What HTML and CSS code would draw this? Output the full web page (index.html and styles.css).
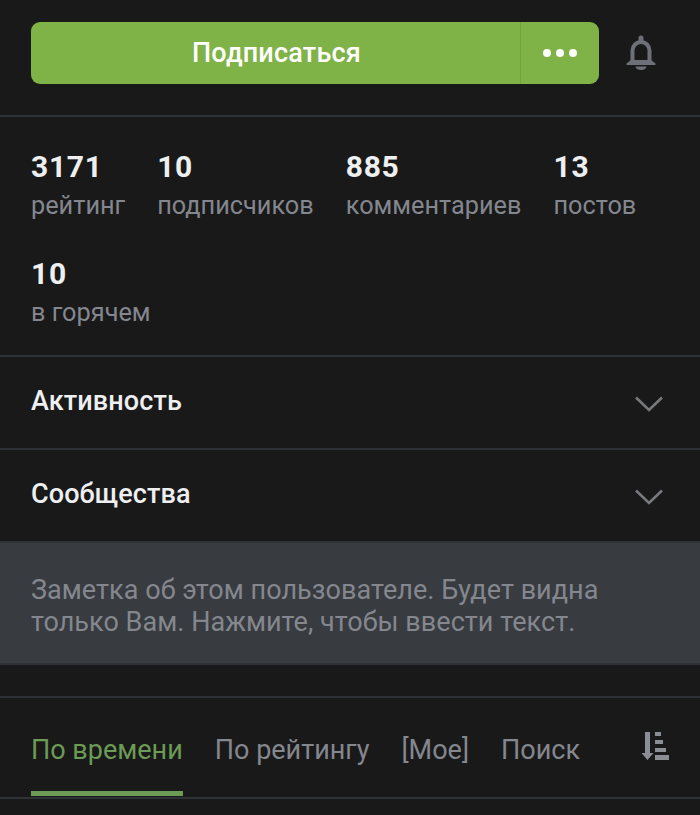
FILE: index.html
```html
<!DOCTYPE html>
<html>
<head>
<meta name="viewport" content="width=device-width, initial-scale=1">
<title>Профиль</title>
<link rel="stylesheet" href="styles.css">
</head>
<body>

<div class="top-bar">
  <div class="sub-btn">
    <div class="sub-main">Подписаться</div>
    <div class="sub-more"><span class="dot"></span><span class="dot"></span><span class="dot"></span></div>
  </div>
  <svg class="bell" width="30" height="36" viewBox="0 0 30 36">
    <path d="M6.500 26V15.500a8.500 8.500 0 0 1 17 0V26" fill="none" stroke="#6d7077" stroke-width="4"/>
    <path d="M12.500 6V3a2.500 2.500 0 0 1 5 0v3z" fill="#6d7077"/>
    <path d="M.500 28.500L5 25H25l4.500 3.500v1.500H.500z" fill="#6d7077"/>
    <path d="M9.500 31.500h11a5.500 3.500 0 0 1-11 0z" fill="#6d7077"/>
  </svg>
</div>

<!-- stats -->
<div class="stats">
  <div class="stat"><b>3171</b><span>рейтинг</span></div>
  <div class="stat"><b>10</b><span>подписчиков</span></div>
  <div class="stat"><b>885</b><span>комментариев</span></div>
  <div class="stat"><b>13</b><span>постов</span></div>
  <div class="stat"><b>10</b><span>в горячем</span></div>
</div>

<div class="row">
  <span class="row-title">Активность</span>
  <svg class="chevron" width="30" height="18" viewBox="0 0 30 18"><path d="M2 2.500L15 15 28 2.500" fill="none" stroke="#77797d" stroke-width="2.600"/></svg>
</div>
<div class="row">
  <span class="row-title">Сообщества</span>
  <svg class="chevron" width="30" height="18" viewBox="0 0 30 18"><path d="M2 2.500L15 15 28 2.500" fill="none" stroke="#77797d" stroke-width="2.600"/></svg>
</div>

<div class="note">Заметка об этом пользователе. Будет видна только Вам. Нажмите, чтобы ввести текст.</div>

<div class="tabs">
  <div class="tab active">По времени</div>
  <div class="tab">По рейтингу</div>
  <div class="tab">[Мое]</div>
  <div class="tab">Поиск</div>
  <svg class="sort" width="30" height="30" viewBox="0 0 30 30">
    <path d="M5 0h5v21h3.500l-6 7-6-7H5z" fill="#8b8e95"/>
    <rect x="15" y="0" width="6" height="4" fill="#8b8e95"/>
    <rect x="15" y="8" width="8" height="4" fill="#8b8e95"/>
    <rect x="15" y="16" width="11" height="4" fill="#8b8e95"/>
    <rect x="15" y="23" width="14" height="5" fill="#8b8e95"/>
  </svg>
</div>

</body>
</html>
```

FILE: styles.css
```css
* {box-sizing: border-box;}

body {
  margin: 0;
  height: 815px;
  overflow: hidden;
  background: #19191a;
  color: #eeeff0;
  font-family: Roboto, "Liberation Sans", sans-serif;
}

/* Subscribe button and bell */
.top-bar {
  display: flex;
  align-items: center;
  height: 117px;
  padding: 0 29px 10px 31px;
  border-bottom: 2px solid #2e3136;
}

.sub-btn {
  display: flex;
  width: 568px;
  height: 62px;
  margin-right: 27px;
  background: #80b347;
  border-radius: 9px;
  color: #fff;
}

.sub-main {
  flex: 1;
  padding-left: 2px;
  font-size: 27px;
  font-weight: 500;
  line-height: 62px;
  letter-spacing: 0.2px;
  text-align: center;
}

.sub-more {
  display: flex;
  align-items: center;
  justify-content: center;
  gap: 5px;
  width: 79px;
  border-left: 1px solid #74a53d;
}

.dot {
  width: 8px;
  height: 8px;
  border-radius: 50%;
  background: #fff;
}

.bell {
  flex: none;
}

/* Stats */
.stats {
  display: flex;
  flex-wrap: wrap;
  align-content: flex-start;
  column-gap: 32px;
  row-gap: 36px;
  height: 240px;
  padding: 33px 31px 0;
  border-bottom: 2px solid #2e3136;
}

.stat b {
  display: block;
  font-size: 30px;
  font-weight: 700;
  line-height: 34px;
  letter-spacing: 0.7px;
}

.stat span {
  display: block;
  margin-top: 7px;
  font-size: 25.300px;
  line-height: 30px;
  color: #84878e;
}

/* Collapsible rows */
.row {
  display: flex;
  align-items: center;
  justify-content: space-between;
  height: 93px;
  padding: 0 36px 0 31px;
  border-bottom: 2px solid #2e3136;
}

.row-title {
  margin-bottom: 3px;
  font-size: 27px;
  font-weight: 500;
  letter-spacing: 0.1px;
}

.chevron {
  margin-top: 2px;
}

/* Note */
.note {
  height: 122px;
  padding: 31px 31px 0;
  background: #383b40;
  border-bottom: 2px solid #2e3136;
  color: #84878e;
  font-size: 27px;
  line-height: 32px;
  letter-spacing: 0.04px;
}

/* Tabs */
.tabs {
  display: flex;
  align-items: stretch;
  height: 103px;
  margin-top: 31px;
  padding: 0 30px 0 31px;
  border-top: 2px solid #2e3136;
  border-bottom: 2px solid #2e3136;
}

.tab {
  margin-right: 32px;
  padding-top: 36px;
  font-size: 27px;
  color: #84878e;
  white-space: nowrap;
}

.tab.active {
  margin-bottom: 1px;
  color: #6c9b55;
  border-bottom: 5px solid #6c9b55;
}

.sort {
  margin: 34px 0 0 auto;
}
```
